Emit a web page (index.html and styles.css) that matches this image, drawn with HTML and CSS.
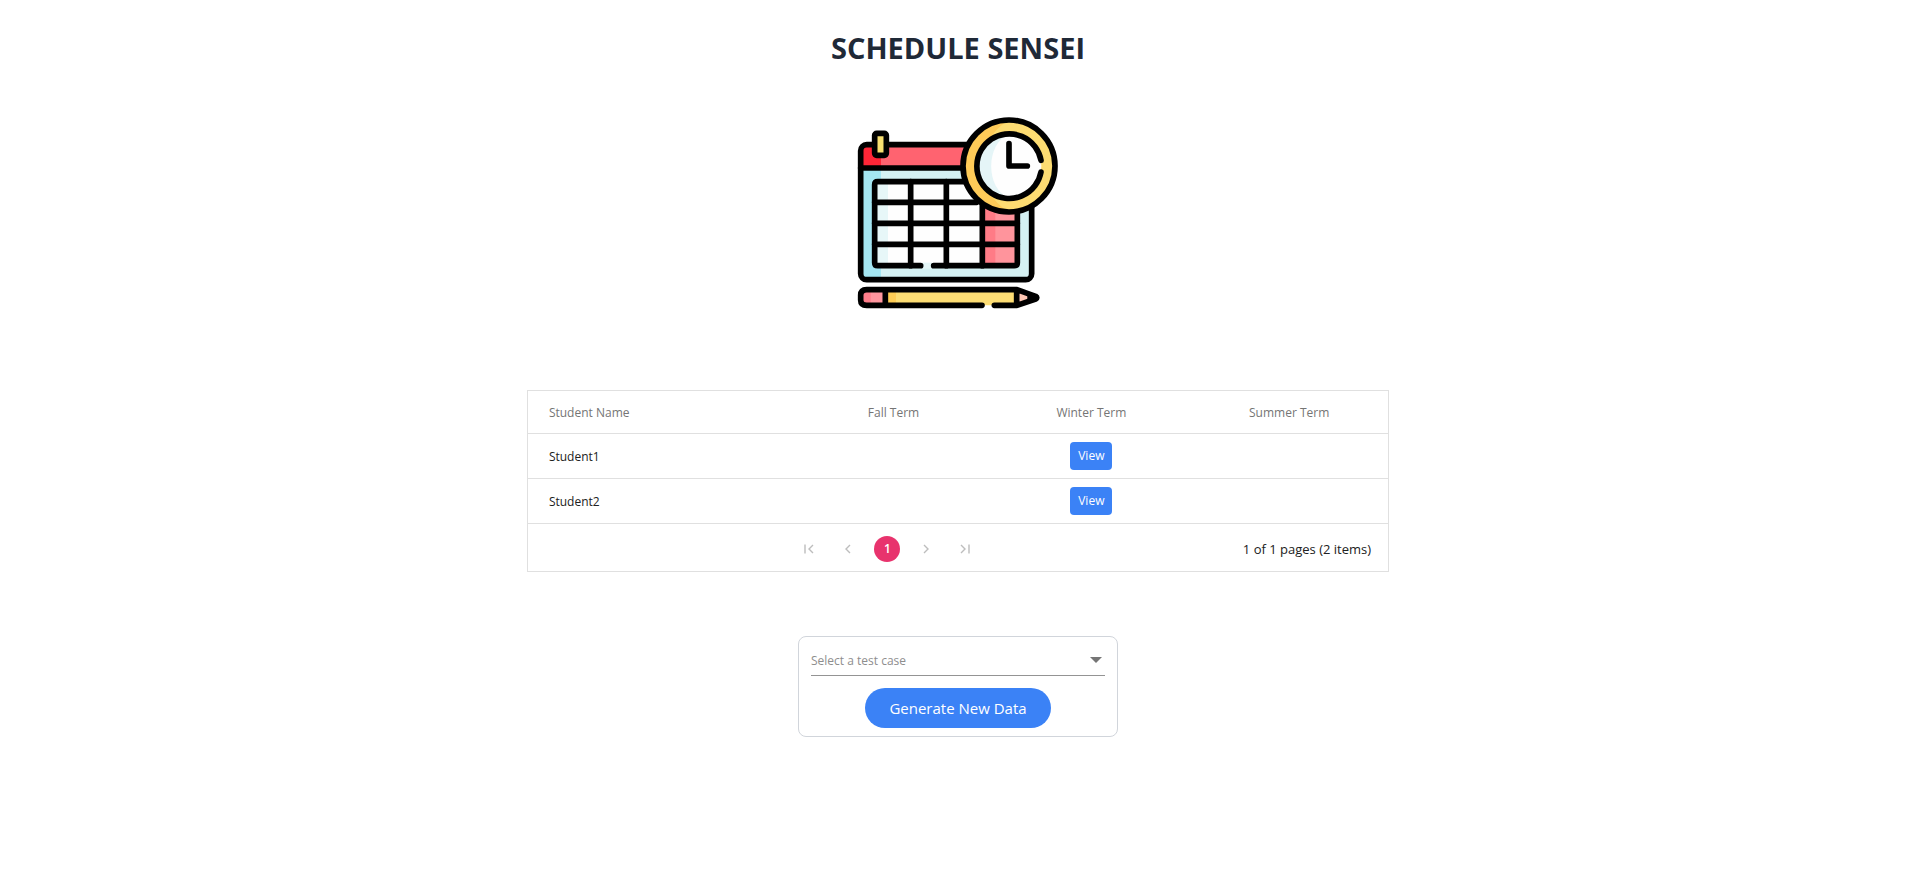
FILE: index.html
```html
<!DOCTYPE html>
<html lang="en">
<head>
<meta charset="utf-8">
<title>Schedule Sensei</title>
<link rel="stylesheet" href="styles.css">
</head>
<body>
<main class="page">
  <h1 class="title">SCHEDULE SENSEI</h1>
  <svg class="logo" viewBox="-6 0 720 675" role="img" aria-label="Calendar with clock and pencil">
    <!-- calendar body -->
    <rect x="62" y="134" width="513" height="405" rx="18" fill="#d5f1f3"/>
    <path d="M62 200H123V539H80Q62 539 62 521Z" fill="#a4e6f2"/>
    <path d="M62 203V152Q62 134 80 134H450V203Z" fill="#ff6370"/>
    <path d="M62 203V152Q62 134 80 134H123V203Z" fill="#ff2637"/>
    <rect x="104" y="245" width="428" height="252" fill="#fefefe"/>
    <rect x="104" y="245" width="40" height="252" fill="#e7f7f8"/>
    <rect x="427" y="307" width="105" height="190" fill="#ff949c"/>
    <rect x="427" y="307" width="39" height="190" fill="#ff7b86"/>
    <path d="M246 488H276V506H246Z" fill="#e4f6f7"/>
    <g fill="none" stroke="#000" stroke-width="17" stroke-linecap="round" stroke-linejoin="round">
      <rect x="62" y="134" width="513" height="405" rx="18"/>
      <path d="M62 204H375"/>
      <path d="M242 497H113Q104 497 104 488V254Q104 245 113 245H390"/>
      <path d="M281 497H523Q532 497 532 488V330"/>
      <path d="M104 307H410M104 370H532M104 433H532M212 245V497M319 245V497M427 315V497"/>
    </g>
    <rect x="104" y="100" width="35" height="66" rx="6" fill="#f7df70" stroke="#000" stroke-width="17"/>
    <!-- clock -->
    <circle cx="507" cy="198" r="138" fill="#fddc72"/>
    <path d="M507 60A138 138 0 0 0 507 336Q430 290 430 198Q430 106 507 60Z" fill="#ffcb58"/>
    <circle cx="507" cy="198" r="138" fill="none" stroke="#000" stroke-width="17"/>
    <circle cx="507" cy="198" r="97" fill="#fefefe"/>
    <path d="M507 101A97 97 0 0 0 507 295C436 264 436 132 507 101Z" fill="#e5f5f7"/>
    <path d="M603 181A97 97 0 1 0 603 216" fill="none" stroke="#000" stroke-width="17" stroke-linecap="round"/>
    <path d="M507 131V198H562" fill="none" stroke="#000" stroke-width="17" stroke-linecap="round" stroke-linejoin="round"/>
    <!-- pencil -->
    <path d="M136 569H530V616H136Z" fill="#fddd74"/>
    <path d="M136 569H168V616H136Z" fill="#ffcd55"/>
    <path d="M136 569H80Q62 569 62 586V600Q62 616 80 616H136Z" fill="#ff969f"/>
    <path d="M92 569H80Q62 569 62 586V600Q62 616 80 616H92Z" fill="#ff7d8a"/>
    <path d="M530 569L591 593L530 616Z" fill="#ffc7b4"/>
    <path d="M562 582L591 593L562 605Z" fill="#000"/>
    <path d="M426 616H80Q62 616 62 600V586Q62 569 80 569H531L587 589Q594 593 587 597L531 616H463M136 569V616M530 569V616" fill="none" stroke="#000" stroke-width="17" stroke-linecap="round" stroke-linejoin="round"/>
  </svg>

  <section class="grid">
    <table class="grid-table">
      <thead>
        <tr>
          <th class="name-col" scope="col">Student Name</th>
          <th scope="col">Fall Term</th>
          <th scope="col">Winter Term</th>
          <th scope="col">Summer Term</th>
        </tr>
      </thead>
      <tbody>
        <tr>
          <td class="name-col">Student1</td>
          <td></td>
          <td><button class="view" type="button">View</button></td>
          <td></td>
        </tr>
        <tr>
          <td class="name-col">Student2</td>
          <td></td>
          <td><button class="view" type="button">View</button></td>
          <td></td>
        </tr>
      </tbody>
    </table>
    <div class="pager">
      <nav class="pager-nav" aria-label="Pages">
        <button class="pager-item" type="button" aria-label="First page" disabled><svg class="pager-icon" viewBox="0 0 10 10"><path d="M1 0.500V9.500M9 1L5 5L9 9"/></svg></button>
        <button class="pager-item" type="button" aria-label="Previous page" disabled><svg class="pager-icon" viewBox="0 0 10 10"><path d="M7 1L3 5L7 9"/></svg></button>
        <button class="pager-item pager-current" type="button" aria-current="page">1</button>
        <button class="pager-item" type="button" aria-label="Next page" disabled><svg class="pager-icon" viewBox="0 0 10 10"><path d="M3 1L7 5L3 9"/></svg></button>
        <button class="pager-item" type="button" aria-label="Last page" disabled><svg class="pager-icon" viewBox="0 0 10 10"><path d="M1 1L5 5L1 9M9 0.500V9.500"/></svg></button>
      </nav>
      <span class="pager-info">1 of 1 pages (2 items)</span>
    </div>
  </section>

  <form class="card">
    <div class="field">
      <select class="select" aria-label="Test case">
        <option>Select a test case</option>
      </select>
      <svg class="caret" viewBox="0 0 12 6" aria-hidden="true"><path d="M0 0H12L6 6Z"/></svg>
    </div>
    <button class="generate" type="button">Generate New Data</button>
  </form>
</main>
</body>
</html>
```
FILE: styles.css
```css
* {
  box-sizing: border-box;
}

body {
  margin: 0;
  background: #fff;
  color: #212121;
  font-family: "Segoe UI", "Open Sans", "Noto Sans", sans-serif;
  font-size: 12px;
}

button,
select {
  margin: 0;
  padding: 0;
  border: 0;
  font: inherit;
}

.page {
  display: flex;
  flex-direction: column;
  align-items: center;
  padding: 30px 2px 0 0;
}

.title {
  margin: 0;
  color: #1f2937;
  font-size: 29px;
  font-weight: 700;
  line-height: 36px;
}

.logo {
  width: 240px;
  margin-top: 34px;
}

.grid {
  width: 45%;
  margin-top: 65px;
  border: 1px solid #e0e0e0;
}

.grid-table {
  width: 100%;
  table-layout: fixed;
  border-collapse: separate;
  border-spacing: 0;
}

.grid-table th,
.grid-table td {
  height: 45px;
  padding: 0;
  border-bottom: 1px solid #e0e0e0;
  text-align: center;
}

.grid-table th {
  height: 43px;
  color: #757575;
  font-weight: 500;
}

.grid-table .name-col {
  width: 31%;
  padding-left: 21px;
  text-align: left;
}

.grid-table td {
  color: #212121;
}

.view {
  height: 28px;
  padding: 0 8px;
  border-radius: 4px;
  background: #3b82f6;
  color: #fff;
  font-weight: 500;
  line-height: 28px;
  vertical-align: middle;
}

.pager {
  display: flex;
  align-items: center;
  height: 47px;
  padding: 2px 17px 0 0;
}

.pager-nav {
  display: flex;
  flex: 1;
  justify-content: center;
  gap: 13px;
  padding-left: 4px;
}

.pager-item {
  display: flex;
  align-items: center;
  justify-content: center;
  width: 26px;
  height: 26px;
  border-radius: 13px;
  background: none;
}

.pager-current {
  background: #e8336d;
  color: #fff;
  font-weight: 600;
}

.pager-info {
  font-size: 13px;
}

.pager-icon {
  width: 10px;
  height: 10px;
  fill: none;
  stroke: #bdbdbd;
  stroke-width: 1.4;
}

.card {
  display: flex;
  flex-direction: column;
  align-items: center;
  width: 320px;
  margin-top: 64px;
  padding: 8px 12px;
  border: 1px solid #d1d5db;
  border-radius: 8px;
}

.field {
  display: flex;
  align-items: center;
  width: 100%;
  height: 31px;
  border-bottom: 1px solid #949494;
}

.select {
  flex: 1;
  appearance: none;
  background: none;
  color: #8e8e8e;
}

.caret {
  width: 12px;
  height: 6px;
  margin-right: 3px;
  fill: #757575;
  pointer-events: none;
}

.generate {
  height: 40px;
  margin-top: 12px;
  padding: 0 24px;
  border-radius: 20px;
  background: #3b82f6;
  color: #fff;
  font-size: 15px;
}
```
